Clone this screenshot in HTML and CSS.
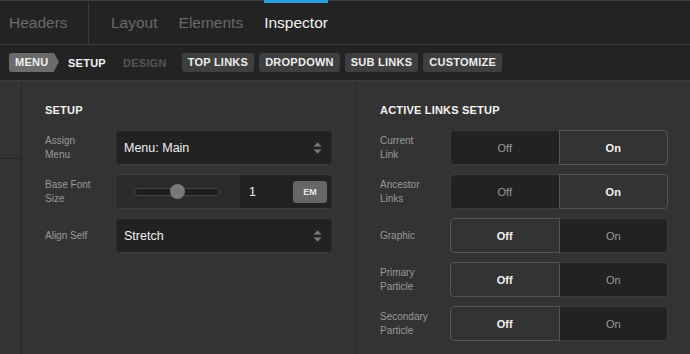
FILE: index.html
```html
<!DOCTYPE html>
<html>
<head>
<meta charset="utf-8">
<link rel="stylesheet" href="styles.css">
</head>
<body>
<div class="app">
  <div class="tabbar">
    <div class="tab-headers">Headers</div>
    <div class="tabs">
      <div class="tab">Layout</div>
      <div class="tab">Elements</div>
      <div class="tab active">Inspector</div>
    </div>
  </div>
  <div class="subbar">
    <span class="crumb">MENU</span>
    <span class="crumb-current">SETUP</span>
    <span class="crumb-dim">DESIGN</span>
    <div class="subnav">
      <span class="subbtn">TOP LINKS</span>
      <span class="subbtn">DROPDOWN</span>
      <span class="subbtn">SUB LINKS</span>
      <span class="subbtn">CUSTOMIZE</span>
    </div>
  </div>
  <div class="content">
    <div class="strip"><div class="strip-top"></div></div>
    <div class="panel panel-left">
      <div class="panel-title">SETUP</div>
      <div class="rows">
        <div class="row">
          <div class="label">Assign<br>Menu</div>
          <div class="select">
            <span class="select-text">Menu: Main</span>
            <svg class="updown" width="9" height="12" viewBox="0 0 9 12"><path d="M4.5 0.5 L8.5 4.5 H0.5 Z M4.5 11.5 L8.5 7.5 H0.5 Z" fill="#7a7a7a"/></svg>
          </div>
        </div>
        <div class="row">
          <div class="label">Base Font<br>Size</div>
          <div class="range">
            <div class="range-slider">
              <div class="track"><div class="thumb"></div></div>
            </div>
            <div class="range-input">
              <span class="range-value">1</span>
              <span class="unit">EM</span>
            </div>
          </div>
        </div>
        <div class="row">
          <div class="label">Align Self</div>
          <div class="select">
            <span class="select-text">Stretch</span>
            <svg class="updown" width="9" height="12" viewBox="0 0 9 12"><path d="M4.5 0.5 L8.5 4.5 H0.5 Z M4.5 11.5 L8.5 7.5 H0.5 Z" fill="#7a7a7a"/></svg>
          </div>
        </div>
      </div>
    </div>
    <div class="panel panel-right">
      <div class="panel-title">ACTIVE LINKS SETUP</div>
      <div class="rows">
        <div class="row">
          <div class="label">Current<br>Link</div>
          <div class="toggle on-right"><span class="seg seg-l">Off</span><span class="seg seg-r">On</span></div>
        </div>
        <div class="row">
          <div class="label">Ancestor<br>Links</div>
          <div class="toggle on-right"><span class="seg seg-l">Off</span><span class="seg seg-r">On</span></div>
        </div>
        <div class="row">
          <div class="label">Graphic</div>
          <div class="toggle on-left"><span class="seg seg-l">Off</span><span class="seg seg-r">On</span></div>
        </div>
        <div class="row">
          <div class="label">Primary<br>Particle</div>
          <div class="toggle on-left"><span class="seg seg-l">Off</span><span class="seg seg-r">On</span></div>
        </div>
        <div class="row">
          <div class="label">Secondary<br>Particle</div>
          <div class="toggle on-left"><span class="seg seg-l">Off</span><span class="seg seg-r">On</span></div>
        </div>
      </div>
    </div>
  </div>
</div>
</body>
</html>
```

FILE: styles.css
```css
* { box-sizing: border-box; }
html, body { margin: 0; padding: 0; }
body {
  width: 690px;
  height: 354px;
  overflow: hidden;
  background: #333333;
  font-family: "Liberation Sans", Arial, sans-serif;
  color: #eeeeee;
}
.app { display: flex; flex-direction: column; height: 354px; }

.tabbar {
  height: 45px;
  flex: none;
  display: flex;
  background: #232323;
  border-top: 1px solid #3e3e3e;
  border-bottom: 1px solid #3a3a3a;
}
.tab-headers {
  width: 89px;
  padding-left: 9px;
  display: flex;
  align-items: center;
  font-size: 15.5px;
  color: #6a6a6a;
  border-right: 1px solid #3a3a3a;
  margin-top: 1px;
}
.tabs { display: flex; gap: 21px; padding-left: 22px; }
.tab {
  display: flex;
  align-items: center;
  font-size: 15.5px;
  color: #6a6a6a;
  border-top: 3px solid transparent;
  margin-top: -1px;
  padding-bottom: 1px;
}
.tab.active { color: #f2f2f2; border-top-color: #2f9ce0; }

.subbar {
  height: 36px;
  flex: none;
  display: flex;
  align-items: center;
  background: #232323;
  border-bottom: 1px solid #3a3a3a;
  padding-left: 9px;
  font-size: 11px;
  font-weight: bold;
  letter-spacing: 0.25px;
}
.crumb {
  position: relative;
  height: 19px;
  line-height: 19px;
  padding: 0 5px 0 6px;
  background: #6b6b6b;
  color: #f0f0f0;
  border-radius: 3px 0 0 3px;
  width: 45px;
}
.crumb::after {
  content: "";
  position: absolute;
  right: -5px;
  top: 0;
  border-top: 9.5px solid transparent;
  border-bottom: 9.5px solid transparent;
  border-left: 5px solid #6b6b6b;
}
.crumb-current { margin-left: 14px; color: #f4f4f4; }
.crumb-dim { margin-left: 17px; color: #555555; }
.subnav { display: flex; gap: 5px; margin-left: 15px; }
.subbtn {
  height: 19px;
  line-height: 19px;
  padding: 0 6px;
  background: #3f3f3f;
  border-radius: 3px;
  color: #eeeeee;
}

.content { flex: 1; display: flex; min-height: 0; }
.strip { width: 22px; flex: none; border-right: 1px solid #272727; }
.strip-top { height: 78px; border-bottom: 1px solid #272727; }
.panel { padding: 23px 22px 0 23px; }
.panel-left { width: 335px; flex: none; border-right: 1px solid #272727; padding-right: 23px; }
.panel-right { flex: 1; }
.panel-title {
  font-size: 11px;
  font-weight: bold;
  line-height: 13px;
  letter-spacing: 0.2px;
  color: #f4f4f4;
  margin-bottom: 13px;
}
.rows { display: flex; flex-direction: column; gap: 9px; }
.row {
  display: grid;
  grid-template-columns: 70px 1fr;
  height: 35px;
  align-items: center;
}
.label { font-size: 10px; line-height: 14px; color: #9a9a9a; }

.select {
  height: 35px;
  display: flex;
  align-items: center;
  justify-content: space-between;
  background: #222222;
  border: 1px solid #3c3c3c;
  border-radius: 4px;
  padding: 0 10px 0 8px;
}
.select-text { font-size: 12.5px; color: #f0f0f0; }
.updown { display: block; }

.range {
  height: 35px;
  display: flex;
  border: 1px solid #3c3c3c;
  border-radius: 4px;
  overflow: hidden;
}
.range-slider {
  width: 125px;
  flex: none;
  display: flex;
  align-items: center;
  padding-left: 18px;
  background: #2b2b2b;
  border-right: 1px solid #1f1f1f;
}
.track {
  position: relative;
  width: 86px;
  height: 8px;
  border-radius: 4px;
  background: #1f1f1f;
  border: 1px solid #444444;
}
.thumb {
  position: absolute;
  left: 35px;
  top: -5px;
  width: 15px;
  height: 15px;
  border-radius: 50%;
  background: #787878;
}
.range-input {
  flex: 1;
  display: flex;
  align-items: center;
  justify-content: space-between;
  background: #222222;
  padding: 0 5px 0 8px;
}
.range-value { font-size: 12.5px; color: #f0f0f0; }
.unit {
  width: 34px;
  height: 22px;
  line-height: 22px;
  text-align: center;
  background: #666666;
  border-radius: 3px;
  font-size: 9px;
  font-weight: bold;
  color: #e6e6e6;
}

.toggle { height: 35px; display: flex; }
.seg {
  flex: 1;
  display: flex;
  align-items: center;
  justify-content: center;
  font-size: 11px;
  border: 1px solid #3a3a3a;
  background: #222222;
  color: #9a9a9a;
}
.seg-l { border-radius: 4px 0 0 4px; }
.seg-r { border-radius: 0 4px 4px 0; }
.on-right .seg-l { border-right: 0; }
.on-left .seg-r { border-left: 0; }
.on-right .seg-r, .on-left .seg-l {
  background: #333333;
  border-color: #565656;
  color: #f4f4f4;
  font-weight: bold;
}
```
